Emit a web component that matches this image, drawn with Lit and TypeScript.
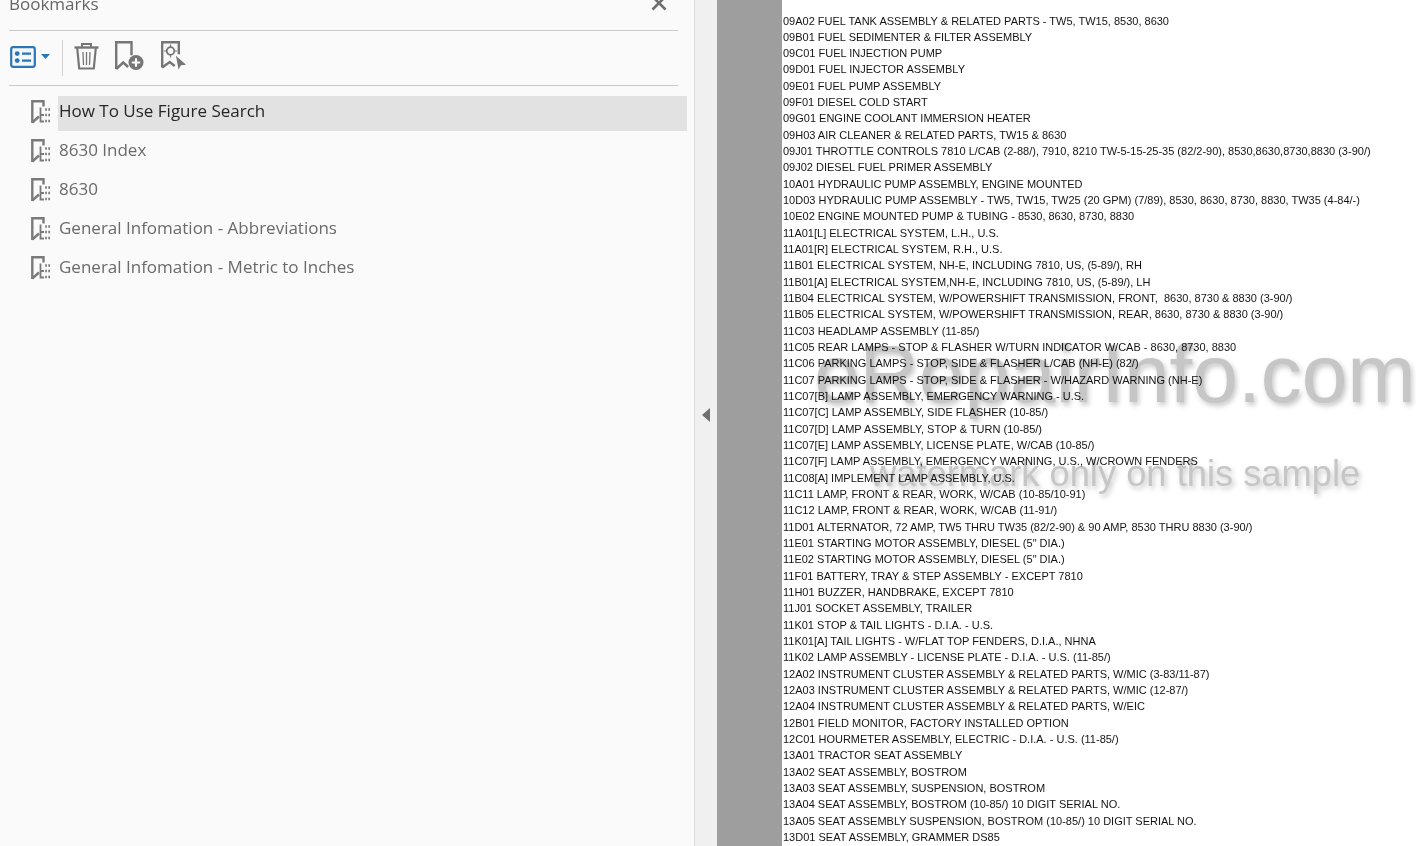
import { LitElement, html, css, svg } from "lit";
import { customElement } from "lit/decorators.js";

const LINES = [
"09A02 FUEL TANK ASSEMBLY & RELATED PARTS - TW5, TW15, 8530, 8630",
"09B01 FUEL SEDIMENTER & FILTER ASSEMBLY",
"09C01 FUEL INJECTION PUMP",
"09D01 FUEL INJECTOR ASSEMBLY",
"09E01 FUEL PUMP ASSEMBLY",
"09F01 DIESEL COLD START",
"09G01 ENGINE COOLANT IMMERSION HEATER",
"09H03 AIR CLEANER & RELATED PARTS, TW15 & 8630",
"09J01 THROTTLE CONTROLS 7810 L/CAB (2-88/), 7910, 8210 TW-5-15-25-35 (82/2-90), 8530,8630,8730,8830 (3-90/)",
"09J02 DIESEL FUEL PRIMER ASSEMBLY",
"10A01 HYDRAULIC PUMP ASSEMBLY, ENGINE MOUNTED",
"10D03 HYDRAULIC PUMP ASSEMBLY - TW5, TW15, TW25 (20 GPM) (7/89), 8530, 8630, 8730, 8830, TW35 (4-84/-)",
"10E02 ENGINE MOUNTED PUMP & TUBING - 8530, 8630, 8730, 8830",
"11A01[L] ELECTRICAL SYSTEM, L.H., U.S.",
"11A01[R] ELECTRICAL SYSTEM, R.H., U.S.",
"11B01 ELECTRICAL SYSTEM, NH-E, INCLUDING 7810, US, (5-89/), RH",
"11B01[A] ELECTRICAL SYSTEM,NH-E, INCLUDING 7810, US, (5-89/), LH",
"11B04 ELECTRICAL SYSTEM, W/POWERSHIFT TRANSMISSION, FRONT,  8630, 8730 & 8830 (3-90/)",
"11B05 ELECTRICAL SYSTEM, W/POWERSHIFT TRANSMISSION, REAR, 8630, 8730 & 8830 (3-90/)",
"11C03 HEADLAMP ASSEMBLY (11-85/)",
"11C05 REAR LAMPS - STOP & FLASHER W/TURN INDICATOR W/CAB - 8630, 8730, 8830",
"11C06 PARKING LAMPS - STOP, SIDE & FLASHER L/CAB (NH-E) (82/)",
"11C07 PARKING LAMPS - STOP, SIDE & FLASHER - W/HAZARD WARNING (NH-E)",
"11C07[B] LAMP ASSEMBLY, EMERGENCY WARNING - U.S.",
"11C07[C] LAMP ASSEMBLY, SIDE FLASHER (10-85/)",
"11C07[D] LAMP ASSEMBLY, STOP & TURN (10-85/)",
"11C07[E] LAMP ASSEMBLY, LICENSE PLATE, W/CAB (10-85/)",
"11C07[F] LAMP ASSEMBLY, EMERGENCY WARNING, U.S., W/CROWN FENDERS",
"11C08[A] IMPLEMENT LAMP ASSEMBLY, U.S.",
"11C11 LAMP, FRONT & REAR, WORK, W/CAB (10-85/10-91)",
"11C12 LAMP, FRONT & REAR, WORK, W/CAB (11-91/)",
"11D01 ALTERNATOR, 72 AMP, TW5 THRU TW35 (82/2-90) & 90 AMP, 8530 THRU 8830 (3-90/)",
"11E01 STARTING MOTOR ASSEMBLY, DIESEL (5\" DIA.)",
"11E02 STARTING MOTOR ASSEMBLY, DIESEL (5\" DIA.)",
"11F01 BATTERY, TRAY & STEP ASSEMBLY - EXCEPT 7810",
"11H01 BUZZER, HANDBRAKE, EXCEPT 7810",
"11J01 SOCKET ASSEMBLY, TRAILER",
"11K01 STOP & TAIL LIGHTS - D.I.A. - U.S.",
"11K01[A] TAIL LIGHTS - W/FLAT TOP FENDERS, D.I.A., NHNA",
"11K02 LAMP ASSEMBLY - LICENSE PLATE - D.I.A. - U.S. (11-85/)",
"12A02 INSTRUMENT CLUSTER ASSEMBLY & RELATED PARTS, W/MIC (3-83/11-87)",
"12A03 INSTRUMENT CLUSTER ASSEMBLY & RELATED PARTS, W/MIC (12-87/)",
"12A04 INSTRUMENT CLUSTER ASSEMBLY & RELATED PARTS, W/EIC",
"12B01 FIELD MONITOR, FACTORY INSTALLED OPTION",
"12C01 HOURMETER ASSEMBLY, ELECTRIC - D.I.A. - U.S. (11-85/)",
"13A01 TRACTOR SEAT ASSEMBLY",
"13A02 SEAT ASSEMBLY, BOSTROM",
"13A03 SEAT ASSEMBLY, SUSPENSION, BOSTROM",
"13A04 SEAT ASSEMBLY, BOSTROM (10-85/) 10 DIGIT SERIAL NO.",
"13A05 SEAT ASSEMBLY SUSPENSION, BOSTROM (10-85/) 10 DIGIT SERIAL NO.",
"13D01 SEAT ASSEMBLY, GRAMMER DS85",
];

const MARKS = [
  { label: "How To Use Figure Search", selected: true },
  { label: "8630 Index", selected: false },
  { label: "8630", selected: false },
  { label: "General Infomation - Abbreviations", selected: false },
  { label: "General Infomation - Metric to Inches", selected: false },
];

const treeIcon = svg`<svg class="tree" width="20" height="24" viewBox="0 0 20 24" fill="none" stroke="#7a7a7a">
  <path d="M1.3 23V1.3H12.5V6.5" stroke-width="2.4"/>
  <path d="M1.3 22.5L8 16.5" stroke-width="2.4"/>
  <path d="M9.5 7.5V21.5H13M9.5 15H13" stroke-width="1.8"/>
  <path d="M14.2 9.5h1.7M14.2 15h1.7M14.2 21h1.7M17.3 9.5h1.7M17.3 15h1.7M17.3 21h1.7" stroke-width="2.4"/>
</svg>`;

@customElement("app-root")
export class AppRoot extends LitElement {
  static styles = css`
    :host { display: block; width: 1420px; height: 846px; overflow: hidden; }
    .app { display: flex; height: 846px; font-family: "Open Sans", "Noto Sans", sans-serif; }
    .side { width: 694px; flex: none; background: #fafafa; border-right: 1px solid #dcdcdc; display: flex; flex-direction: column; }
    .head { height: 30px; margin: 0 16px 0 9px; border-bottom: 1px solid #c9c9c9; display: flex; align-items: flex-end; justify-content: space-between; overflow: hidden; }
    .title { font-size: 17px; line-height: 20px; color: #666; padding-bottom: 16px; }
    .close { margin: 0 11px 19px 0; display: block; }
    .tools { height: 50px; padding-bottom: 4px; margin: 0 16px 0 9px; border-bottom: 1px solid #c9c9c9; display: flex; align-items: center; }
    .tools svg { display: block; flex: none; }
    .view { margin: 1px 0 0 1px; }
    .caret { margin-left: 5px; }
    .sep { width: 1px; height: 36px; background: #d2d2d2; margin: 3px 11px 0 12px; }
    .trash { margin-right: 16px; }
    .add { margin-right: 17px; }
    .list { display: flex; flex-direction: column; padding: 8px 7px 0 31px; }
    .row { display: flex; align-items: center; height: 39px; }
    .row .tree { flex: none; margin: 0 7px 4px 0; }
    .label { flex: 1; height: 35px; line-height: 30px; font-size: 17px; color: #6a6a6a; padding-left: 1px; white-space: nowrap; }
    .label.sel { background: #e2e2e2; color: #262626; }
    .split { width: 22px; flex: none; background: #f0f0f0; display: flex; align-items: center; justify-content: center; }
    .split svg { display: block; margin-top: -16px; }
    .gutter { width: 65px; flex: none; background: #9e9e9e; }
    .page { flex: 1; background: #fff; position: relative; overflow: hidden; padding: 12.5px 0 0 1px; font-family: "Liberation Sans", Arial, sans-serif; font-size: 11px; line-height: 16.34px; color: #141414; }
    .line { white-space: pre; height: 16.34px; }
    .mark { position: absolute; white-space: nowrap; color: #c6c6c6; mix-blend-mode: multiply; text-shadow: 2px 3px 5px rgba(80,80,80,0.32); pointer-events: none; font-family: "Liberation Sans", Arial, sans-serif; }
    .m1 { left: 32px; top: 329px; font-size: 82px; line-height: 90px; }
    .m2 { left: 88px; top: 446px; font-size: 36.3px; line-height: 56px; }
  `;

  render() {
    return html`<div class="app">
      <div class="side">
        <div class="head">
          <span class="title">Bookmarks</span>
          <svg class="close" width="16" height="16" viewBox="0 0 16 16"><path d="M1.5 1.5l13 13M14.5 1.5l-13 13" stroke="#6f6f6f" stroke-width="2.6"/></svg>
        </div>
        <div class="tools">
          <svg class="view" width="26" height="22" viewBox="0 0 26 22" fill="none">
            <rect x="1.2" y="1.2" width="23.6" height="19.6" rx="2" stroke="#2a76b8" stroke-width="2.2" fill="#f4f8fb"/>
            <circle cx="7.2" cy="7.6" r="2.4" fill="#2a76b8"/><circle cx="7.2" cy="14.6" r="2.4" fill="#2a76b8"/>
            <path d="M12 7.6h9M12 14.6h9" stroke="#2a76b8" stroke-width="2.2"/>
          </svg>
          <svg class="caret" width="9" height="5" viewBox="0 0 9 5"><path d="M0 0h9L4.5 5z" fill="#2a76b8"/></svg>
          <span class="sep"></span>
          <svg class="trash" width="25" height="28" viewBox="0 0 25 28" fill="none" stroke="#767676">
            <path d="M0.5 5.5h24" stroke-width="2.4"/><path d="M8 5V2h9v3" stroke-width="2"/>
            <path d="M3.2 6l2 20.5h14.6l2-20.5" stroke-width="2.2"/>
            <path d="M9 10l.5 13M12.5 10v13M16 10l-.5 13" stroke-width="1.3"/>
          </svg>
          <svg class="add" width="29" height="30" viewBox="0 0 29 30" fill="none">
            <path d="M1.2 28V1.2H16.5v13" stroke="#767676" stroke-width="2.4"/>
            <path d="M1.2 28l7-6.5 5 4.5" stroke="#767676" stroke-width="2.4"/>
            <circle cx="21" cy="21.5" r="7.5" fill="#767676"/>
            <path d="M16.8 21.5h8.4M21 17.3v8.4" stroke="#fff" stroke-width="2.2"/>
          </svg>
          <svg width="25" height="30" viewBox="0 0 25 30" fill="none">
            <path d="M1.2 26.5V1.2h16.6v12" stroke="#767676" stroke-width="2.4"/>
            <path d="M1.2 26.5l7.5-5.5 5 4" stroke="#767676" stroke-width="2.4"/>
            <path d="M9.5 3.5v13M3 10h13" stroke="#767676" stroke-width="1.2"/>
            <circle cx="9.5" cy="10" r="3.8" stroke="#767676" stroke-width="1.8" fill="#fafafa"/>
            <path d="M15 14.7L25 23.7L20 24.3L17.5 28.5Z" fill="#767676"/>
          </svg>
        </div>
        <div class="list">
          ${MARKS.map(m => html`<div class="row">${treeIcon}<div class="label ${m.selected ? "sel" : ""}">${m.label}</div></div>`)}
        </div>
      </div>
      <div class="split">
        <svg width="8" height="14" viewBox="0 0 8 14"><path d="M8 0v14L0 7z" fill="#6f6f6f"/></svg>
      </div>
      <div class="gutter"></div>
      <div class="page">
        ${LINES.map(l => html`<div class="line">${l}</div>`)}
        <div class="mark m1">eRepairInfo.com</div>
        <div class="mark m2">watermark only on this sample</div>
      </div>
    </div>`;
  }
}
